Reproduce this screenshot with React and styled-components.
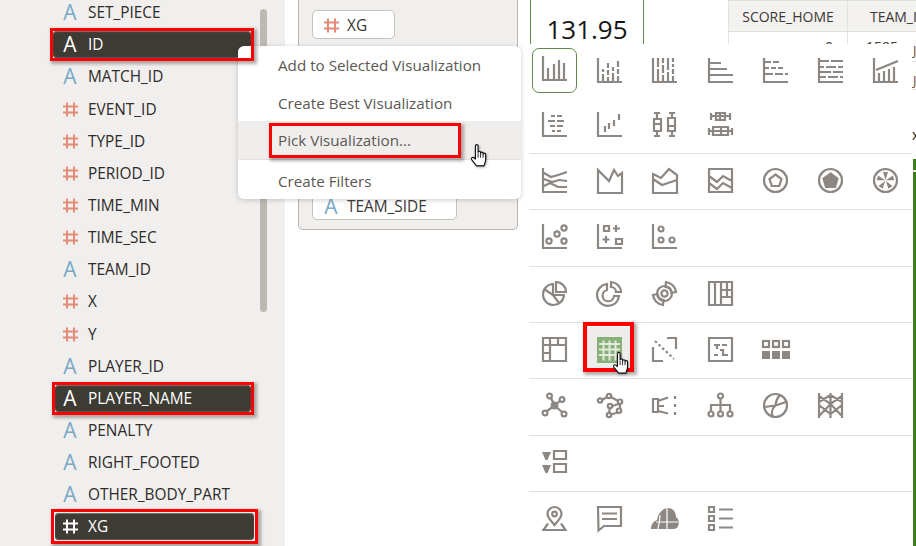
import React from 'react'
import styled, { createGlobalStyle, css } from 'styled-components'

const GlobalStyle = createGlobalStyle`
  html, body { margin: 0; padding: 0; background: #fff; }
  body { font-family: "Open Sans", "Liberation Sans", sans-serif; }
  * { box-sizing: border-box; }
`

const redFrame = css`
  position: absolute;
  z-index: 5;
  box-sizing: border-box;
  border: 3px solid #f00;
  box-shadow: 2px 2px 3px 1px rgba(60, 55, 50, .4);
  pointer-events: none;
`

const Page = styled.div`
  position: relative;
  display: flex;
  width: 916px;
  height: 546px;
  overflow: hidden;
  background: #fff;
`

const Sidebar = styled.aside`
  position: relative;
  flex: 0 0 285px;
  height: 546px;
  background: #f0efee;
  overflow: hidden;
`

const Scrollbar = styled.div`
  position: absolute;
  left: 260px;
  top: 9px;
  width: 7px;
  height: 303px;
  border-radius: 4px;
  background: #bdb8b2;
`

const FieldList = styled.div`
  display: flex;
  flex-direction: column;
  margin-top: -3.4px;
`

const Field = styled.div`
  display: flex;
  align-items: center;
  height: 32.15px;
  flex: none;
`

const FieldPill = styled.div`
  position: relative;
  display: flex;
  align-items: center;
  gap: 11px;
  height: 27px;
  width: ${p => p.$width}px;
  margin-left: ${p => 53 + p.$inset}px;
  padding-left: ${p => 10 - p.$inset}px;
  font-size: 15.4px;
  color: #2e2b28;
  ${p => p.$selected && css`
    background: #3e3a34;
    border-radius: 4px;
    color: #fff;
    box-shadow: inset 0 1px 1px #77736d, inset 0 -1px 1px #5c5852;
    &::after {
      content: '';
      ${redFrame}
      inset: ${-3 - p.$gap}px;
    }
  `}
`

const TextIcon = styled.span`
  flex: none;
  width: 14px;
  text-align: center;
  font-size: 21px;
  line-height: 1;
  color: ${p => (p.$light ? '#fff' : '#78a9c4')};
`

const HashSvg = styled.svg`
  flex: none;
  width: 15px;
  height: 15px;
  margin-right: -1px;
  stroke: ${p => (p.$light ? '#fff' : '#e58b77')};
  stroke-width: 2;
  fill: none;
`

const Canvas = styled.section`
  flex: 0 0 219px;
  height: 230px;
  margin-left: 13px;
  padding: 10px 60px 9px 13px;
  display: flex;
  flex-direction: column;
  justify-content: space-between;
  align-items: flex-start;
  background: #f0efee;
  border: 1px solid #b9b5ae;
  border-top: 0;
  border-radius: 0 0 5px 5px;
`

const DropChip = styled.div`
  display: flex;
  align-items: center;
  gap: 9px;
  width: ${p => p.$width}px;
  height: 29px;
  padding: 2px 0 0 11px;
  background: #fff;
  border: 1px solid #c5c1bb;
  border-radius: 5px;
  font-size: 15.4px;
  color: #3b3835;
`

const Results = styled.div`
  display: flex;
  margin-left: 12px;
  flex: 1;
  min-width: 0;
`

const Kpi = styled.div`
  flex: 0 0 114px;
  height: 60px;
  padding-top: 12px;
  border-left: 1px solid #5f8a4c;
  border-right: 1px solid #5f8a4c;
  text-align: center;
  font-size: 26px;
  line-height: 34px;
  color: #161514;
`

const TableArea = styled.div`
  flex: none;
  width: 189px;
  margin-left: 84px;
  display: flex;
  flex-direction: column;
  overflow: hidden;
  font-size: 14px;
  color: #3b3835;
`

const HeaderRow = styled.div`
  flex: none;
  display: grid;
  grid-template-columns: 119px 102px;
  height: 32px;
  background: #f3f2f0;
  border-top: 1px solid #dfdfdc;
  border-bottom: 1px solid #dfdfdc;
`

const HeaderCell = styled.div`
  display: flex;
  align-items: center;
  justify-content: center;
  border-left: 1px solid #dfdfdc;
  border-right: 1px solid #dfdfdc;
  margin-right: -1px;
  white-space: nowrap;
  font-size: 14px;
`

const BodyRow = styled.div`
  flex: none;
  display: grid;
  grid-template-columns: 119px 65px 30px;
  height: ${p => p.$height}px;
  border-bottom: 1px solid #e4e3df;
  font-size: 14px;
`

const NumCell = styled.div`
  padding-right: ${p => p.$pad}px;
  line-height: 30px;
  text-align: right;
  border-left: 1px solid #e4e3df;
`

const EdgeCell = styled.div`
  padding-left: 1px;
  line-height: 36px;
  white-space: nowrap;
  font-size: 13px;
  color: #6b4b2a;
`

const EdgeMark = styled.div`
  flex: none;
  margin: 35px 0 0 184px;
  line-height: 20px;
  font-size: 14px;
  color: #222;
`

const GreenBar = styled.div`
  flex: none;
  margin: 14px 0 0 185px;
  height: 400px;
  background: linear-gradient(#3f7d1f 0 11px, #e8efe2 11px 13px, #3f7d1f 13px);
`

const Menu = styled.div`
  position: absolute;
  z-index: 3;
  left: 238px;
  top: 46px;
  width: 283px;
  background: #fff;
  border-radius: 6px;
  box-shadow: 0 1px 5px rgba(70, 65, 60, .25);
  font-size: 15.2px;
  color: #5b5753;
`

const MenuItem = styled.div`
  position: relative;
  display: flex;
  align-items: center;
  height: ${p => (p.$tall ? 39 : 37.7)}px;
  padding: ${p => (p.$tall ? '2px' : '0')} 0 0 40px;
  ${p => p.$active && css`
    background: #efeeec;
    &::after {
      content: '';
      ${redFrame}
      left: 31px;
      top: 1.5px;
      width: 192px;
      height: 35px;
    }
  `}
`

const MenuDivider = styled.div`
  height: 1px;
  margin: 0 1px;
  background: #e3e2dd;
`

const Picker = styled.div`
  position: absolute;
  z-index: 2;
  left: 529px;
  top: 44px;
  bottom: 0;
  width: 383px;
  background: #fff;
`

const PickerGroup = styled.div`
  padding: ${p => (p.$first ? '4px 0 6px 3px' : '4px 0 6.33px 3px')};
  border-bottom: ${p => (p.$last ? '0' : '1px solid #e2e1dc')};
  display: grid;
  grid-template-columns: repeat(7, 45px);
  grid-auto-rows: 45px;
  gap: 9px 10.2px;
`

const IconCell = styled.div`
  position: relative;
  display: flex;
  align-items: center;
  justify-content: center;
  ${p => p.$selected && css`
    padding-bottom: 5px;
    border: 1px solid #5f8a4c;
    border-radius: 7px;
  `}
  ${p => p.$framed && css`
    background: #eeedeb;
    &::after {
      content: '';
      ${redFrame}
      border-width: 4px;
      left: -4px;
      top: -5px;
      right: -2px;
      bottom: 0;
    }
  `}
`

const Glyph = styled.svg`
  flex: none;
  width: 25px;
  height: 25px;
  overflow: visible;
  fill: none;
  stroke: ${p => (p.$green ? '#8ab07a' : '#8c8782')};
  stroke-width: 2.2;
`

const Cursor = styled.svg`
  position: absolute;
  z-index: 6;
  left: ${p => p.$x}px;
  top: ${p => p.$y}px;
  width: ${p => p.$w}px;
  height: ${p => p.$h}px;
  filter: drop-shadow(1px 1px 1px rgba(0, 0, 0, .3));
`

const axis = 'M1 0V24H25'

const wedges = [0, 72, 144, 216, 288]

const ICONS = {
  bar: <path d={`${axis}M6 12V23M12 8V23M17 4V23M22 7V23`} />,
  barStack: <path d={`${axis}M6 11V14M6 16V23M11 5V10M11 12V17M11 19V23M16 9V13M16 15V23M21 3V9M21 11V16M21 18V23`} />,
  barFull: <path d={`${axis}M6 0V9M6 11V23M11 0V5M11 7V15M11 17V23M16 0V12M16 14V23M21 0V4M21 6V9M21 11V16M21 18V23`} />,
  hbar: <path d={`${axis}M2 5H13M2 11H19M2 17H25`} />,
  hbarStack: <path d={`${axis}M2 4H8M10 4H16M2 10H6M8 10H13M15 10H20M2 16H10M12 16H20M22 16H25`} />,
  hbarFull: <path d={`${axis}M2 3H11M13 3H25M2 9H6M8 9H18M20 9H25M2 14H13M15 14H25M2 19H8M10 19H20M22 19H25`} />,
  combo: <path d={`${axis}M6 15V23M11 13V23M16 11V23M21 9V23M3 12L25 3`} />,
  butterfly: <path d={`${axis}M9 4H13M15 4H20M6 9H13M15 9H22M8 14H13M15 14H21M10 19H13M15 19H19`} />,
  waterfall: <path d={`${axis}M8 14V20M12 11V17M17 8V14M22 2V8`} />,
  boxV: <path d="M2 1H8M5 1V7M2 7H9V19H2ZM2 12H9M5 19V24M2 24H8M17 1H23M20 1V6M16 6H23V19H16ZM16 14H23M20 19V24M17 24H23" />,
  boxH: <path d="M3 4H22M3 1V8M22 1V8M8 1H17V8H8ZM12 1V8M1 19H24M1 16V23M24 16V23M5 15H20V23H5ZM13 15V23" />,
  lines: <path d={`M1 0V24H25M2 5L9 9L16 7L25 4M2 11L10 14L17 12L25 13M2 18L8 15L16 19L25 19`} />,
  area: <path d="M1 2L12 13L17 2L21 8L25 5V25H1Z" />,
  areaStack: <path d="M1 6L9 10L17 1L25 7V25H1ZM1 11L10 17L25 12" />,
  areaFull: <path d="M1 1H24V24H1ZM1 8L9 14L15 8L24 13M1 15L9 21L15 15L24 20" />,
  radar: (
    <>
      <circle cx="12.5" cy="12.5" r="11.5" />
      <polygon points="12.5,6.5 18.5,11 16.2,18 8.8,18 6.5,11" />
    </>
  ),
  radarFill: (
    <>
      <circle cx="12.5" cy="12.5" r="11.5" />
      <polygon fill="#8c8782" points="12.5,5.5 19.5,10.7 17,19 8,19 5.5,10.7" />
    </>
  ),
  radarBar: (
    <>
      <circle cx="12.5" cy="12.5" r="11.5" />
      {wedges.map(a => (
        <polygon key={a} fill="#8c8782" stroke="none" points="12.5,12 10,4 15,4" transform={`rotate(${a} 12.5 12.5)`} />
      ))}
    </>
  ),
  scatter: (
    <>
      <path d={axis} />
      <circle cx="7" cy="17" r="2.6" />
      <circle cx="15" cy="10" r="2.6" />
      <circle cx="22" cy="4" r="2.6" />
      <circle cx="22" cy="17" r="2.6" />
    </>
  ),
  gridPlot: <path d={`${axis}M7 2H12V7H7ZM19 1V8M16 4.5H23M9 12V19M5.5 15.5H12.5M19 15H25V20H19Z`} />,
  dots: (
    <>
      <path d={axis} />
      <circle cx="9" cy="5" r="2.5" />
      <circle cx="9" cy="16" r="2.5" />
      <circle cx="20" cy="16" r="2.5" />
    </>
  ),
  pie: <path d="M11 3A10.5 10.5 0 1 0 22 14H11ZM11 14L2 8M11 14L17 22M14 1A10 10 0 0 1 24 11H14Z" />,
  donut: <path d="M10 3A11 11 0 1 0 22 15H17A5.7 5.7 0 1 1 10 9ZM14 1A10.5 10.5 0 0 1 24 11H19A5 5 0 0 0 14 6Z" />,
  sunburst: (
    <>
      <circle cx="12.5" cy="12.5" r="3.2" />
      <circle cx="12.5" cy="12.5" r="7.5" />
      <path d="M14 1A11.5 11.5 0 0 1 24 11L19.5 12A7 7 0 0 0 13.5 6ZM11 24A11.5 11.5 0 0 1 1 14L5.5 13A7 7 0 0 0 11.5 19Z" />
    </>
  ),
  treemap: <path d="M1 1H24V24H1ZM7 1V24M13 1V24M13 9H24M19 1V9M13 16H24M19 9V16" />,
  pivot: <path d="M1 1H24V24H1ZM1 8H24M8 1V24M16 1V8M1 16H8" />,
  table: (
    <>
      <rect x="0" y="0" width="25" height="26" fill="#8ab07a" stroke="none" />
      <path stroke="#e3ebde" strokeWidth="2" d="M6.5 3.5V23.5M12.5 3.5V23.5M18.5 3.5V23.5M2 7H23M2 12.5H23M2 18H23" />
    </>
  ),
  corr: (
    <>
      <path d="M1 10V24H11M15 1H24V12" />
      <path d="M3 4L22 22" strokeDasharray="2.5 2.5" />
    </>
  ),
  tag: <path d="M1 1H24V24H1ZM6 8H12M9 8V12M14 8H19M12 13H15V18H20M6 18H10" />,
  tiles: (
    <>
      <rect x="0" y="4" width="6" height="6" />
      <rect x="10" y="4" width="6" height="6" />
      <rect x="20" y="4" width="6" height="6" />
      <rect x="-1" y="14" width="8" height="8" fill="#8c8782" stroke="none" />
      <rect x="9" y="14" width="8" height="8" fill="#8c8782" stroke="none" />
      <rect x="19" y="14" width="8" height="8" fill="#8c8782" stroke="none" />
    </>
  ),
  network: (
    <>
      <path d="M9 5L12.5 12.5M18 8L12.5 12.5M5 18L12.5 12.5M20 19L12.5 12.5" />
      <circle cx="7.5" cy="3" r="2.4" />
      <circle cx="20" cy="6.5" r="2.4" />
      <circle cx="3" cy="20" r="2.4" />
      <circle cx="22" cy="21" r="2.4" />
      <circle cx="12.5" cy="12.5" r="2.8" />
    </>
  ),
  graph: (
    <>
      <path d="M5 7L10 4M14 4L21 8M22 11L15 13M13 15L12 20M21 19.5L14 21.5M23 11V15.5" />
      <circle cx="3" cy="7.5" r="2.2" />
      <circle cx="12" cy="3" r="2.2" />
      <circle cx="23" cy="8.7" r="2.2" />
      <circle cx="13" cy="13" r="2.2" />
      <circle cx="22" cy="17.7" r="2.2" />
      <circle cx="12" cy="22" r="2.2" />
    </>
  ),
  sankey: (
    <>
      <path d="M1 6H6V19H1ZM6 8L16 4.5M6 13H12M6 18L16 20.5" />
      <path d="M23 3V6M23 11V14M23 19V22" />
    </>
  ),
  org: (
    <>
      <path d="M12.5 5.5V18M3 18V12H22V18" />
      <circle cx="12.5" cy="3" r="2.5" />
      <circle cx="3" cy="21" r="2.5" />
      <circle cx="12.5" cy="21" r="2.5" />
      <circle cx="22" cy="21" r="2.5" />
    </>
  ),
  chord: (
    <>
      <circle cx="12.5" cy="12.5" r="11.5" />
      <path d="M1.5 14L12.5 12.5L23 9M12.5 12.5C13 8 15 4 17 2.5M12.5 12.5C9 15 8.5 20 9.5 23.5" />
    </>
  ),
  parallel: <path d="M1 0V25M12.5 0V25M24 0V25M1 9L12.5 2L24 9M1 3L12.5 11L24 3M1 23L12.5 11L24 23M1 12L12.5 21L24 12" />,
  filterList: (
    <>
      <polygon fill="#8c8782" stroke="none" points="0,2 9,2 5.5,10 3.5,10" />
      <polygon fill="#8c8782" stroke="none" points="0,15 9,15 5.5,23 3.5,23" />
      <path d="M12 1H24V9H12ZM12 14H24V22H12Z" />
    </>
  ),
  pin: (
    <>
      <path d="M12.5 1C8 1 5.5 4.5 5.5 8C5.5 12 10 15.5 12.5 19C15 15.5 19.5 12 19.5 8C19.5 4.5 17 1 12.5 1Z" />
      <circle cx="12.5" cy="8" r="2.3" />
      <path d="M6 17.5L1.5 24H23.5L19 17.5" />
    </>
  ),
  comment: <path d="M1 1H24V20H7L1.5 24.5ZM5 7.5H20M5 13H20" />,
  cloud: (
    <>
      <path fill="#8c8782" stroke="none" d="M-1 23C-1 18 2 15 5 14C6 7 11 2 16 2C21 2 24 6 24 11C28 13 28 23 22 23Z" />
      <path stroke="#fff" strokeWidth="1.2" d="M15 2V23M8 9C8 13 7 18 6 23M4 16H26" />
    </>
  ),
  list: <path d="M1 1H6V6H1ZM1 10H6V15H1ZM1 19H6V24H1ZM11 3.5H25M11 12.5H25M11 21.5H25" />,
}

const PICKER_GROUPS = [
  ['bar', 'barStack', 'barFull', 'hbar', 'hbarStack', 'hbarFull', 'combo', 'butterfly', 'waterfall', 'boxV', 'boxH'],
  ['lines', 'area', 'areaStack', 'areaFull', 'radar', 'radarFill', 'radarBar'],
  ['scatter', 'gridPlot', 'dots'],
  ['pie', 'donut', 'sunburst', 'treemap'],
  ['pivot', 'table', 'corr', 'tag', 'tiles'],
  ['network', 'graph', 'sankey', 'org', 'chord', 'parallel'],
  ['filterList'],
  ['pin', 'comment', 'cloud', 'list'],
]

const FIELDS = [
  { name: 'SET_PIECE', type: 'a' },
  { name: 'ID', type: 'a', selected: true, inset: 0, width: 198, gap: 0 },
  { name: 'MATCH_ID', type: 'a' },
  { name: 'EVENT_ID', type: 'n' },
  { name: 'TYPE_ID', type: 'n' },
  { name: 'PERIOD_ID', type: 'n' },
  { name: 'TIME_MIN', type: 'n' },
  { name: 'TIME_SEC', type: 'n' },
  { name: 'TEAM_ID', type: 'a' },
  { name: 'X', type: 'n' },
  { name: 'Y', type: 'n' },
  { name: 'PLAYER_ID', type: 'a' },
  { name: 'PLAYER_NAME', type: 'a', selected: true, inset: 2, width: 196, gap: 0 },
  { name: 'PENALTY', type: 'a' },
  { name: 'RIGHT_FOOTED', type: 'a' },
  { name: 'OTHER_BODY_PART', type: 'a' },
  { name: 'XG', type: 'n', selected: true, inset: 2, width: 199, gap: 1 },
]

const Hash = ({ light }) => (
  <HashSvg $light={light} viewBox="0 0 15 15">
    <path d="M4 0.5V14.5M11 0.5V14.5M0 4.5H15M0 10.5H15" />
  </HashSvg>
)

const TypeIcon = ({ type, light }) =>
  type === 'n' ? <Hash light={light} /> : <TextIcon $light={light}>A</TextIcon>

const Hand = props => (
  <Cursor viewBox="0 0 20 26" {...props}>
    <path
      fill="#fff"
      stroke="#111"
      strokeWidth="1.3"
      strokeLinejoin="round"
      d="M6 14V3C6 1 9 1 9 3V10C9 8.5 11.8 8.5 11.8 10V11C11.8 9.5 14.6 9.5 14.6 11V12C14.6 10.6 17.4 10.6 17.4 12V18C17.4 21 16 23 15.5 25H7C6 23 3 20 1.8 18C1 16.4 2.8 14.8 4.2 16L6 17.5Z"
    />
    <path stroke="#111" strokeWidth="1" d="M9 11V16M11.8 11V16M14.6 12V16" />
  </Cursor>
)

export default function App() {
  return (
    <>
      <GlobalStyle />
      <Page>
        <Sidebar>
          <Scrollbar />
          <FieldList>
            {FIELDS.map(f => (
              <Field key={f.name}>
                <FieldPill
                  $selected={f.selected}
                  $inset={f.inset || 0}
                  $width={f.width || 197}
                  $gap={f.gap || 0}
                >
                  <TypeIcon type={f.type} light={f.selected} />
                  {f.name}
                </FieldPill>
              </Field>
            ))}
          </FieldList>
        </Sidebar>

        <Canvas>
          <DropChip $width={83}>
            <Hash />
            XG
          </DropChip>
          <DropChip $width={145}>
            <TypeIcon type="a" />
            TEAM_SIDE
          </DropChip>
        </Canvas>

        <Results>
          <Kpi>131.95</Kpi>
          <TableArea>
            <HeaderRow>
              <HeaderCell>SCORE_HOME</HeaderCell>
              <HeaderCell>TEAM_ID</HeaderCell>
            </HeaderRow>
            <BodyRow $height={30}>
              <NumCell $pad={14}>0</NumCell>
              <NumCell $pad={14}>1595</NumCell>
              <EdgeCell>JI</EdgeCell>
            </BodyRow>
            <BodyRow $height={28}>
              <NumCell $pad={14} />
              <NumCell $pad={14} />
              <EdgeCell>JI</EdgeCell>
            </BodyRow>
            <EdgeMark>x</EdgeMark>
            <GreenBar />
          </TableArea>
        </Results>

        <Menu>
          <MenuItem>Add to Selected Visualization</MenuItem>
          <MenuItem>Create Best Visualization</MenuItem>
          <MenuItem $active>Pick Visualization...</MenuItem>
          <MenuDivider />
          <MenuItem $tall>Create Filters</MenuItem>
        </Menu>

        <Picker>
          {PICKER_GROUPS.map((group, i) => (
            <PickerGroup key={group[0]} $first={i === 0} $last={i === PICKER_GROUPS.length - 1}>
              {group.map(name => (
                <IconCell key={name} $selected={name === 'bar'} $framed={name === 'table'}>
                  <Glyph viewBox="0 0 25 25" $green={name === 'table'}>{ICONS[name]}</Glyph>
                </IconCell>
              ))}
            </PickerGroup>
          ))}
        </Picker>

        <Hand $x={470} $y={143} $w={18} $h={24} />
        <Hand $x={612} $y={351} $w={18} $h={23} />
      </Page>
    </>
  )
}
